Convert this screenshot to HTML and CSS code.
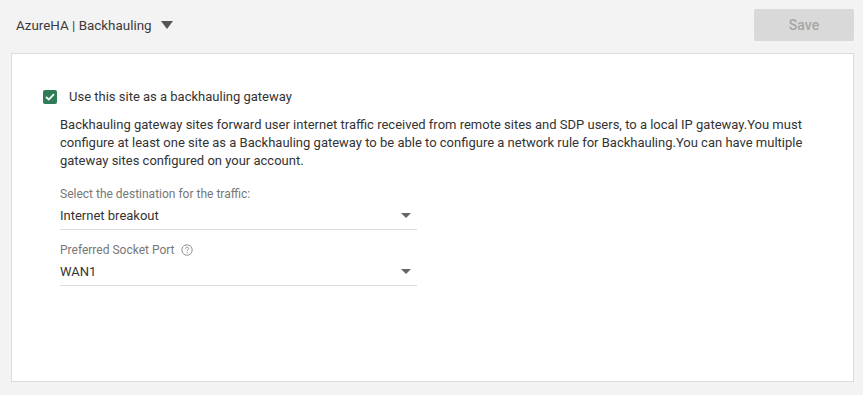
FILE: index.html
```html
<!DOCTYPE html>
<html lang="en">
<head>
    <meta charset="UTF-8">
    <meta name="viewport" content="width=device-width, initial-scale=1.0">
    <title>Backhauling</title>
    <link rel="stylesheet" href="styles.css">
</head>
<body>

<div class="page">
    <div class="topbar">
        <div class="site-title">
            AzureHA | Backhauling
            <span class="caret"></span>
        </div>
        <button class="save-btn" disabled>Save</button>
    </div>

    <div class="panel">
        <label class="check-row">
            <span class="checkbox">
                <svg width="10" height="8" viewBox="0 0 10 8"><path d="M1 4 L3.8 6.6 L9 1.2" fill="none" stroke="#fff" stroke-width="1.8"/></svg>
            </span>
            Use this site as a backhauling gateway
        </label>

        <div class="details">
            <p class="description">Backhauling gateway sites forward user internet traffic received from remote sites and SDP users, to a local IP gateway.You must configure at least one site as a Backhauling gateway to be able to configure a network rule for Backhauling.You can have multiple gateway sites configured on your account.</p>

            <div class="field">
                <div class="field-label">Select the destination for the traffic:</div>
                <div class="select">
                    <span>Internet breakout</span>
                    <span class="select-arrow"></span>
                </div>
            </div>

            <div class="field">
                <div class="field-label">
                    Preferred Socket Port
                    <svg class="help" width="12" height="12" viewBox="0 0 12 12">
                        <circle cx="6" cy="6" r="5.2" fill="none" stroke="#888" stroke-width="0.9"/>
                        <path d="M4.4 4.7 C4.4 3.7 5.1 3.2 6 3.2 C6.9 3.2 7.6 3.8 7.6 4.6 C7.6 5.6 6.2 5.7 6.2 6.9" fill="none" stroke="#888" stroke-width="0.9"/>
                        <circle cx="6.2" cy="8.6" r="0.6" fill="#888"/>
                    </svg>
                </div>
                <div class="select">
                    <span>WAN1</span>
                    <span class="select-arrow"></span>
                </div>
            </div>
        </div>
    </div>
</div>

</body>
</html>
```

FILE: styles.css
```css
* {
    margin: 0;
    padding: 0;
    box-sizing: border-box;
}
body {
    font-family: Roboto, 'Liberation Sans', sans-serif;
    background-color: #f3f3f3;
    color: #333;
}
.page {
    padding: 9px 9px 13px 11px;
}
.topbar {
    display: flex;
    justify-content: space-between;
    align-items: center;
    height: 32px;
    margin-bottom: 12px;
}
.site-title {
    display: flex;
    align-items: center;
    padding-left: 5px;
    font-size: 13.4px;
    color: #3a3a3a;
}
.caret {
    width: 0;
    height: 0;
    margin-left: 9px;
    border-left: 6px solid transparent;
    border-right: 6px solid transparent;
    border-top: 8px solid #555;
}
.save-btn {
    width: 100px;
    height: 32px;
    border: none;
    border-radius: 2px;
    background-color: #d9d9d9;
    color: #a6a6a6;
    font-family: inherit;
    font-size: 14px;
    font-weight: 500;
}
.panel {
    background-color: #fff;
    border: 1px solid #dcdcdc;
    height: 329px;
    padding: 35px 31px 0 31px;
}
.check-row {
    display: flex;
    align-items: center;
    font-size: 13px;
    color: #333;
}
.checkbox {
    display: flex;
    justify-content: center;
    align-items: center;
    width: 14px;
    height: 14px;
    margin-right: 12px;
    border-radius: 2px;
    background-color: #2e7d57;
}
.details {
    padding-left: 17px;
    margin-top: 12px;
}
.description {
    font-size: 13px;
    line-height: 18px;
    color: #333;
    max-width: 770px;
}
.field {
    width: 357px;
    margin-top: 17px;
}
.field + .field {
    margin-top: 13px;
}
.field-label {
    display: flex;
    align-items: center;
    font-size: 12px;
    color: #777;
    height: 14px;
}
.help {
    margin-left: 6px;
}
.select {
    display: flex;
    justify-content: space-between;
    align-items: center;
    height: 29px;
    border-bottom: 1px solid #ddd;
    font-size: 13px;
    color: #333;
}
.select-arrow {
    width: 0;
    height: 0;
    margin-right: 6px;
    border-left: 5px solid transparent;
    border-right: 5px solid transparent;
    border-top: 5px solid #666;
}
```
